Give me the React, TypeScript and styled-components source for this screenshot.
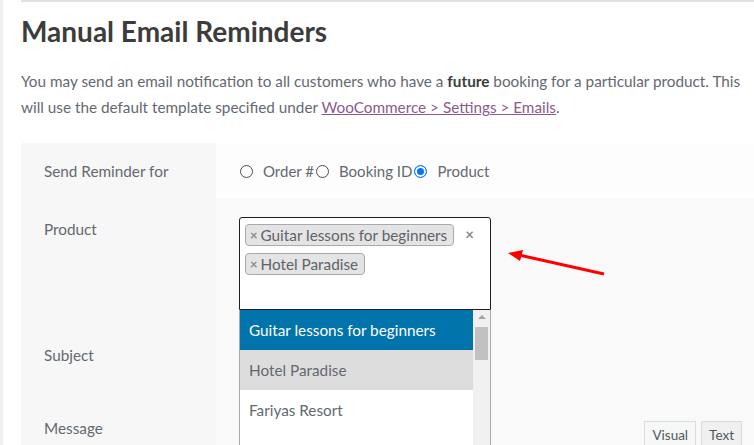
import { createGlobalStyle, styled } from "styled-components";

const GlobalStyle = createGlobalStyle`
  html, body {
    margin: 0;
    padding: 0;
    background: #fff;
  }
  body {
    font-family: Lato, "Open Sans", sans-serif;
    color: #646970;
    overflow: hidden;
  }
`;

const Page = styled.div`
  height: 445px;
  border-left: 3px solid #f0f0f1;
  padding-left: 18px;
  overflow: hidden;
`;

const Content = styled.div`
  border-top: 2px solid #e2e2e2;
`;

const Title = styled.h2`
  margin: 11px 0 0;
  font-size: 28px;
  line-height: 36px;
  font-weight: 700;
  color: #3c3c3c;
`;

const Intro = styled.p`
  margin: 19px 0 0;
  font-size: 15.3px;
  line-height: 26px;
  color: #646970;

  b {
    color: #3c3c3c;
  }

  a {
    color: #8b5a8c;
    text-decoration: underline;
  }
`;

const Form = styled.div`
  margin-top: 23px;
`;

const Row = styled.div<{ $height: number }>`
  display: grid;
  grid-template-columns: 195px 1fr;
  height: ${(p) => p.$height}px;
`;

const Label = styled.div<{ $center?: boolean }>`
  background: #f7f7f7;
  box-sizing: border-box;
  padding: ${(p) => (p.$center ? "0 23px" : "18px 23px 0")};
  display: flex;
  align-items: ${(p) => (p.$center ? "center" : "flex-start")};
  font-size: 15.3px;
  line-height: 24px;
`;

const Field = styled.div<{ $bg: string; $center?: boolean }>`
  background: ${(p) => p.$bg};
  box-sizing: border-box;
  padding: ${(p) => (p.$center ? "0 23px" : "18px 23px 0")};
  display: flex;
  align-items: ${(p) => (p.$center ? "center" : "flex-start")};
  position: relative;
  font-size: 15.3px;
  line-height: 24px;
`;

const RadioGroup = styled.div`
  display: flex;
  align-items: center;
  font-size: 15px;
`;

const Radio = styled.span<{ $checked?: boolean }>`
  width: 13px;
  height: 13px;
  box-sizing: border-box;
  border-radius: 50%;
  border: 1px solid ${(p) => (p.$checked ? "#0075ff" : "#4d4d4d")};
  background: ${(p) => (p.$checked ? "#0075ff" : "#fff")};
  box-shadow: ${(p) => (p.$checked ? "inset 0 0 0 2px #fff" : "none")};
  margin: 0 10px 0 1px;
  flex: none;
`;

const RadioText = styled.span`
  margin-right: 1px;
`;

const SelectWrap = styled.div`
  position: relative;
  width: 252px;
`;

const SelectBox = styled.div`
  height: 93px;
  box-sizing: border-box;
  border: 1px solid #1e1e1e;
  border-radius: 3px 3px 0 0;
  background: #fff;
  padding: 6px 5px;
  display: flex;
  flex-direction: column;
  align-items: flex-start;
  gap: 7px;
  position: relative;
`;

const Chip = styled.span`
  display: inline-flex;
  align-items: center;
  height: 22px;
  box-sizing: border-box;
  padding: 0 6px 0 4px;
  background: #e4e4e4;
  border: 1px solid #aaa;
  border-radius: 4px;
  font-size: 15.3px;
  color: #5f6368;
`;

const ChipX = styled.span`
  color: #8a8a8a;
  font-weight: 700;
  font-size: 13px;
  margin-right: 3px;
`;

const ClearX = styled.span`
  position: absolute;
  top: 8px;
  right: 16px;
  color: #8a8a8a;
  font-weight: 700;
  font-size: 15px;
  line-height: 16px;
`;

const Dropdown = styled.div`
  position: absolute;
  top: 100%;
  left: 0;
  width: 252px;
  height: 160px;
  box-sizing: border-box;
  border: 1px solid #aaa;
  border-top: none;
  background: #fff;
  display: flex;
  z-index: 2;
`;

const Options = styled.ul`
  list-style: none;
  margin: 0;
  padding: 0;
  flex: 1;
`;

const Option = styled.li<{ $state?: "active" | "hover" }>`
  height: 40px;
  display: flex;
  align-items: center;
  padding-left: 9px;
  font-size: 15.3px;
  background: ${(p) =>
    p.$state === "active" ? "#0073aa" : p.$state === "hover" ? "#ddd" : "#fff"};
  color: ${(p) => (p.$state === "active" ? "#fff" : "#646970")};
`;

const Scrollbar = styled.div`
  width: 17px;
  background: #f1f1f1;
  display: flex;
  flex-direction: column;
  align-items: center;
  padding-top: 5px;
  box-sizing: border-box;
`;

const ScrollArrow = styled.span`
  width: 0;
  height: 0;
  border-left: 4px solid transparent;
  border-right: 4px solid transparent;
  border-bottom: 4px solid #a3a3a3;
`;

const ScrollThumb = styled.span`
  width: 13px;
  height: 33px;
  margin-top: 8px;
  background: #c1c1c1;
`;

const Pointer = styled.svg`
  position: absolute;
  left: 289px;
  top: 49px;
  pointer-events: none;
`;

const SubjectInput = styled.div`
  width: 250px;
  height: 34px;
  border: 1px solid #8c8f94;
  border-radius: 4px;
  background: #fff;
`;

const EditorTabs = styled.div`
  margin-left: auto;
  margin-top: 5px;
  margin-right: -11px;
  display: flex;
  gap: 5px;
`;

const Tab = styled.span<{ $active?: boolean }>`
  height: 28px;
  box-sizing: border-box;
  padding: 3px 7px;
  border: 1px solid #dcdcde;
  background: ${(p) => (p.$active ? "#f6f7f7" : "#f0f0f1")};
  color: #50575e;
  font-size: 13.5px;
  line-height: 20px;
`;

export default function App() {
  return (
    <>
      <GlobalStyle />
      <Page>
        <Content>
          <Title>Manual Email Reminders</Title>
          <Intro>
            You may send an email notification to all customers who have a <b>future</b> booking for
            a particular product. This will use the default template specified under{" "}
            <a href="#">WooCommerce &gt; Settings &gt; Emails</a>.
          </Intro>
          <Form>
            <Row $height={56}>
              <Label $center>Send Reminder for</Label>
              <Field $bg="#fdfdfd" $center>
                <RadioGroup>
                  <Radio />
                  <RadioText>Order #</RadioText>
                  <Radio />
                  <RadioText>Booking ID</RadioText>
                  <Radio $checked />
                  <RadioText>Product</RadioText>
                </RadioGroup>
              </Field>
            </Row>
            <Row $height={126}>
              <Label>Product</Label>
              <Field $bg="#f9f9f9">
                <SelectWrap>
                  <SelectBox>
                    <Chip>
                      <ChipX>×</ChipX>Guitar lessons for beginners
                    </Chip>
                    <Chip>
                      <ChipX>×</ChipX>Hotel Paradise
                    </Chip>
                    <ClearX>×</ClearX>
                  </SelectBox>
                  <Dropdown>
                    <Options>
                      <Option $state="active">Guitar lessons for beginners</Option>
                      <Option $state="hover">Hotel Paradise</Option>
                      <Option>Fariyas Resort</Option>
                    </Options>
                    <Scrollbar>
                      <ScrollArrow />
                      <ScrollThumb />
                    </Scrollbar>
                  </Dropdown>
                </SelectWrap>
                <Pointer width="104" height="30" viewBox="0 0 104 30">
                  <line x1="99" y1="26" x2="14" y2="7" stroke="#f00" strokeWidth="3" />
                  <polygon points="3,5 18,2 15,13" fill="#f00" />
                </Pointer>
              </Field>
            </Row>
            <Row $height={73}>
              <Label>Subject</Label>
              <Field $bg="#f9f9f9">
                <SubjectInput />
              </Field>
            </Row>
            <Row $height={60}>
              <Label>Message</Label>
              <Field $bg="#f9f9f9">
                <EditorTabs>
                  <Tab $active>Visual</Tab>
                  <Tab>Text</Tab>
                </EditorTabs>
              </Field>
            </Row>
          </Form>
        </Content>
      </Page>
    </>
  );
}
